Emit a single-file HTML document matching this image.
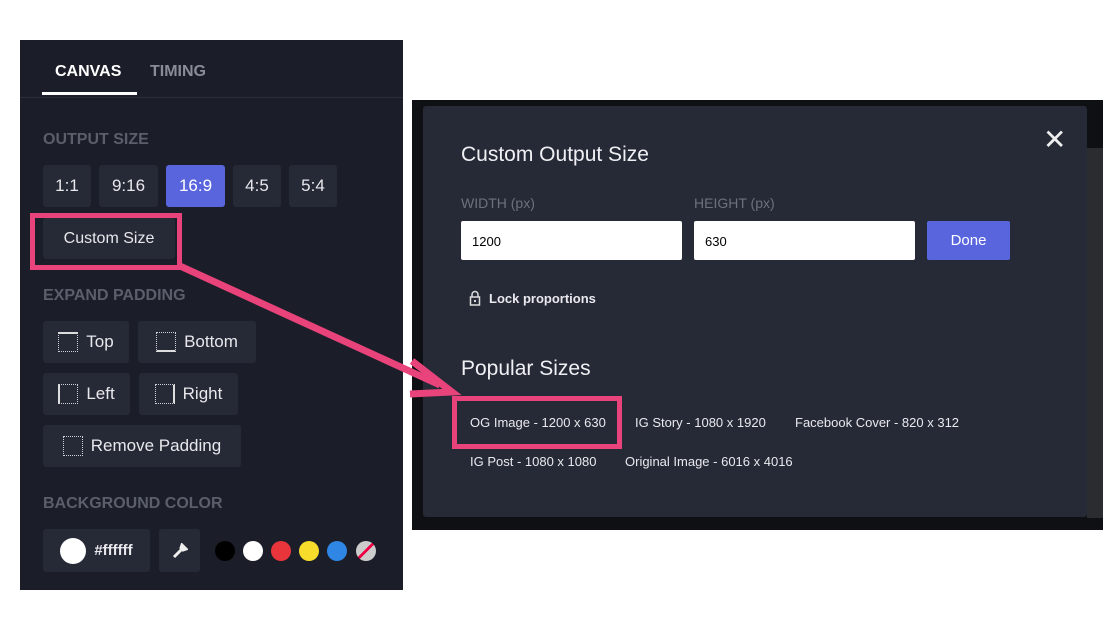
<!DOCTYPE html>
<html><head><style>
*{margin:0;padding:0;box-sizing:border-box}
body{width:1120px;height:630px;background:#fff;position:relative;overflow:hidden;font-family:"Liberation Sans",sans-serif}
.a{position:absolute}
.p{left:20px;top:40px;width:383px;height:550px;background:#1b1e28}
.h{color:#5b5f6b;font-size:16px;font-weight:bold}
.b{position:absolute;background:#262936;border-radius:3px;color:#e8e8ec;font-size:17px;display:flex;align-items:center;justify-content:center;gap:8px}
.ic{width:20px;height:20px;border:1.5px dotted #cfd0d6}
.m{color:#e9e9ee;font-size:13px}
</style></head><body>
<div class="a p"></div>
<div class="a" style="left:55px;top:63px;color:#fff;font-weight:bold;font-size:16px">CANVAS</div>
<div class="a" style="left:150px;top:63px;color:#8a8d97;font-weight:bold;font-size:16px">TIMING</div>
<div class="a" style="left:42px;top:92px;width:95px;height:3px;background:#fff"></div>
<div class="a" style="left:20px;top:97px;width:383px;height:1px;background:#2a2d37"></div>
<div class="a h" style="left:43px;top:131px">OUTPUT SIZE</div>
<div class="b" style="left:43px;top:165px;width:48px;height:42px">1:1</div>
<div class="b" style="left:99px;top:165px;width:59px;height:42px">9:16</div>
<div class="b" style="left:166px;top:165px;width:59px;height:42px;background:#5865dd;color:#fff">16:9</div>
<div class="b" style="left:233px;top:165px;width:48px;height:42px">4:5</div>
<div class="b" style="left:289px;top:165px;width:48px;height:42px">5:4</div>
<div class="b" style="left:43px;top:218px;width:132px;height:41px;font-size:16px">Custom Size</div>
<div class="a" style="left:30px;top:213px;width:152px;height:57px;border:5px solid #e8437a"></div>
<div class="a h" style="left:43px;top:287px">EXPAND PADDING</div>
<div class="b" style="left:43px;top:321px;width:86px;height:42px"><span class="ic" style="border-top:2px solid #ddd"></span>Top</div>
<div class="b" style="left:138px;top:321px;width:118px;height:42px"><span class="ic" style="border-bottom:2px solid #ddd"></span>Bottom</div>
<div class="b" style="left:43px;top:373px;width:87px;height:42px"><span class="ic" style="border-left:2px solid #ddd"></span>Left</div>
<div class="b" style="left:139px;top:373px;width:99px;height:42px"><span class="ic" style="border-right:2px solid #ddd"></span>Right</div>
<div class="b" style="left:43px;top:425px;width:198px;height:42px"><span class="ic"></span>Remove Padding</div>
<div class="a h" style="left:43px;top:495px">BACKGROUND COLOR</div>
<div class="b" style="left:43px;top:529px;width:107px;height:43px;font-size:15px;font-weight:bold"><span style="width:26px;height:26px;border-radius:50%;background:#fff"></span>#ffffff</div>
<div class="b" style="left:159px;top:529px;width:41px;height:43px"><svg width="16" height="16" viewBox="0 0 16 16"><path d="M2 14l7-7M10 2l4 4-3 1-2-2z" stroke="#eee" stroke-width="3" fill="none"/></svg></div>
<div class="a" style="left:215px;top:541px;width:20px;height:20px;border-radius:50%;background:#000"></div>
<div class="a" style="left:243px;top:541px;width:20px;height:20px;border-radius:50%;background:#fff"></div>
<div class="a" style="left:271px;top:541px;width:20px;height:20px;border-radius:50%;background:#e8353b"></div>
<div class="a" style="left:299px;top:541px;width:20px;height:20px;border-radius:50%;background:#f7dc2c"></div>
<div class="a" style="left:327px;top:541px;width:20px;height:20px;border-radius:50%;background:#2f86e4"></div>
<div class="a" style="left:356px;top:541px;width:20px;height:20px;border-radius:50%;background:linear-gradient(135deg,#ccc 45%,#e04 45%,#e04 55%,#ccc 55%)"></div>

<div class="a" style="left:412px;top:100px;width:691px;height:430px;background:#0f1014"></div>
<div class="a" style="left:1087px;top:148px;width:16px;height:370px;background:#2b2c2f"></div>
<div class="a" style="left:423px;top:106px;width:664px;height:411px;background:#262a36;border-radius:3px"></div>
<div class="a" style="left:461px;top:143px;color:#f0f0f4;font-size:21px">Custom Output Size</div>
<div class="a" style="left:1043px;top:126px;color:#eee;font-size:28px;line-height:28px">✕</div>
<div class="a" style="left:461px;top:195px;color:#6d717d;font-size:14px">WIDTH (px)</div>
<div class="a" style="left:694px;top:195px;color:#6d717d;font-size:14px">HEIGHT (px)</div>
<div class="a" style="left:461px;top:221px;width:221px;height:39px;background:#fff;border-radius:2px;font-size:13px;padding:13px 0 0 11px">1200</div>
<div class="a" style="left:694px;top:221px;width:221px;height:39px;background:#fff;border-radius:2px;font-size:13px;padding:13px 0 0 11px">630</div>
<div class="a" style="left:927px;top:221px;width:83px;height:39px;background:#5865dd;border-radius:2px;color:#fff;font-size:15px;text-align:center;line-height:39px">Done</div>
<svg class="a" style="left:469px;top:290px" width="12" height="16" viewBox="0 0 12 16"><path d="M3 7V4.5a3 3 0 0 1 6 0V7" stroke="#ddd" stroke-width="1.5" fill="none"/><rect x="1.5" y="7" width="9" height="8" stroke="#ddd" stroke-width="1.5" fill="none"/><rect x="5" y="10" width="2" height="2" fill="#ddd"/></svg>
<div class="a m" style="left:489px;top:291px;font-weight:bold">Lock proportions</div>
<div class="a" style="left:461px;top:357px;color:#f0f0f4;font-size:21px">Popular Sizes</div>
<div class="a m" style="left:470px;top:415px">OG Image - 1200 x 630</div>
<div class="a m" style="left:635px;top:415px">IG Story - 1080 x 1920</div>
<div class="a m" style="left:795px;top:415px">Facebook Cover - 820 x 312</div>
<div class="a m" style="left:470px;top:454px">IG Post - 1080 x 1080</div>
<div class="a m" style="left:625px;top:454px">Original Image - 6016 x 4016</div>
<div class="a" style="left:452px;top:396px;width:170px;height:53px;border:5px solid #e8437a"></div>
<svg class="a" style="left:0;top:0" width="1120" height="630"><path d="M180 266L440 385" stroke="#e8437a" stroke-width="7"/><path d="M412 361L452 392 410 394" stroke="#e8437a" stroke-width="7" fill="none"/></svg>
</body></html>
